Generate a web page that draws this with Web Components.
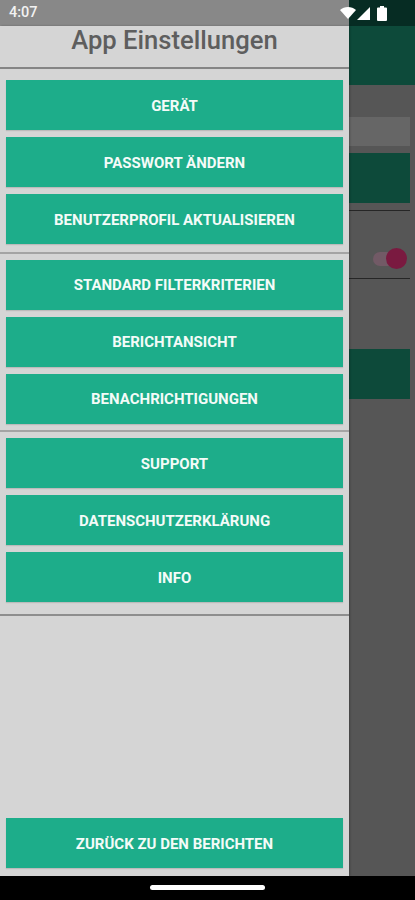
<!DOCTYPE html>
<html lang="de"><head><meta charset="utf-8"><title>App Einstellungen</title>
<style>
html,body{margin:0;padding:0;background:#565656}
body{width:415px;height:900px;overflow:hidden;font-family:Roboto,"Liberation Sans",sans-serif}
</style></head><body>
<app-screen>
  <status-bar slot="status"></status-bar>
  <app-backdrop slot="backdrop"></app-backdrop>
  <settings-drawer slot="drawer">
    <drawer-group><menu-button>GERÄT</menu-button><menu-button>PASSWORT ÄNDERN</menu-button><menu-button>BENUTZERPROFIL AKTUALISIEREN</menu-button></drawer-group>
    <drawer-group><menu-button>STANDARD FILTERKRITERIEN</menu-button><menu-button>BERICHTANSICHT</menu-button><menu-button>BENACHRICHTIGUNGEN</menu-button></drawer-group>
    <drawer-group><menu-button>SUPPORT</menu-button><menu-button>DATENSCHUTZERKLÄRUNG</menu-button><menu-button>INFO</menu-button></drawer-group>
    <menu-button slot="footer">ZURÜCK ZU DEN BERICHTEN</menu-button>
  </settings-drawer>
  <nav-bar slot="nav"></nav-bar>
</app-screen>
<script>
function def(name, html){
  customElements.define(name, class extends HTMLElement{
    constructor(){super();this.attachShadow({mode:'open'}).innerHTML=html;}
  });
}
def('app-screen',`<style>
:host{display:flex;flex-direction:column;width:415px;height:900px;position:relative;overflow:hidden}
.main{flex:1;position:relative;min-height:0;display:flex;flex-direction:column}
.over{position:absolute;left:0;top:0;bottom:0;display:flex}
</style>
<slot name="status"></slot>
<div class="main"><slot name="backdrop"></slot><div class="over"><slot name="drawer"></slot></div></div>
<slot name="nav"></slot>`);
def('status-bar',`<style>
:host{display:flex;height:26px;background:linear-gradient(90deg,#888 0,#888 349px,#062c23 349px);color:#f2f2f2;align-items:center;justify-content:space-between;padding:0 28px 0 9px;box-sizing:border-box;font:500 14.500px/26px Roboto,"Liberation Sans",sans-serif;flex:none}
.icons{display:flex;align-items:center}
svg{display:block;fill:#fff}
</style>
<span>4:07</span>
<div class="icons">
<svg width="16" height="12" viewBox="0 0 16 12" style="margin-top:-1px"><path d="M0 3C2.200 1.100 5 0 8 0s5.800 1.100 8 3L8 12z"/></svg>
<svg width="13" height="13" viewBox="0 0 13 13" style="margin-left:1px"><path d="M13 0V13H0z"/></svg>
<svg width="10" height="15" viewBox="0 0 10 15" style="margin-left:7px"><path d="M3 0h4v1.500h2a1 1 0 0 1 1 1V14a1 1 0 0 1-1 1H1a1 1 0 0 1-1-1V2.500a1 1 0 0 1 1-1h2z"/></svg>
</div>`);
def('app-backdrop',`<style>
:host{display:flex;flex-direction:column;flex:1;min-height:0;background:#565656;padding-left:349px}
.bar{height:59px;background:#0d4a3a;flex:none}
.body{display:flex;flex-direction:column;padding:32px 5px 0 0}
.input{height:29px;background:#666}
.btn{height:50px;background:#0d4a3a}
.rule{height:1px;background:#262626}
.toggle{height:67px;box-sizing:border-box;padding-top:28px;position:relative;display:flex;align-items:center;justify-content:flex-end}
.track{width:22px;height:14px;border-radius:7px;background:#725a66;margin-right:15px}
.thumb{position:absolute;right:3px;top:37px;width:21px;height:21px;border-radius:50%;background:#7a1a40}
</style>
<div class="bar"></div>
<div class="body">
<div class="input"></div>
<div class="btn" style="margin-top:7px"></div>
<div class="rule" style="margin-top:7px"></div>
<div class="toggle"><div class="track"></div><div class="thumb"></div></div>
<div class="rule"></div>
<div class="btn" style="margin-top:70px"></div>
</div>`);
def('settings-drawer',`<style>
:host{display:flex;flex-direction:column;width:349px;box-sizing:border-box;background:#d5d5d5;box-shadow:1px 0 2px rgba(0,0,0,.25)}
h1{margin:0;height:43px;padding-top:1px;box-sizing:border-box;border-bottom:2px solid #858585;text-align:center;font:500 25.600px/27px Roboto,"Liberation Sans",sans-serif;color:#5e5e5e}
.list{flex:1;display:flex;flex-direction:column;min-height:0}
.foot{display:flex;flex-direction:column;padding:0 6px 8px}
</style>
<h1>App Einstellungen</h1>
<div class="list"><slot></slot></div>
<div class="foot"><slot name="footer"></slot></div>`);
def('drawer-group',`<style>
:host{display:flex;flex-direction:column;gap:7px;padding:11px 6px 8px;border-bottom:2px solid #a4a4a4}
:host(:nth-of-type(2)){padding-top:5.500px;padding-bottom:6.500px}
:host(:nth-of-type(3)){padding-top:6px;padding-bottom:12px;border-bottom-color:#8e8e8e}
</style><slot></slot>`);
def('menu-button',`<style>
:host{display:flex;align-items:center;justify-content:center;box-sizing:border-box;height:50px;padding-top:1px;flex:none;background:#1dad8a;color:#f4fbf8;font:700 15px/20px Roboto,"Liberation Sans",sans-serif;box-shadow:0 1px 1px rgba(0,0,0,.12);white-space:nowrap}
</style><slot></slot>`);
def('nav-bar',`<style>
:host{display:flex;height:24px;flex:none;background:#000;align-items:center;justify-content:center}
i{display:block;width:115px;height:5px;border-radius:3px;background:#fff;margin-top:-1px}
</style><i></i>`);
</script>
</body></html>
